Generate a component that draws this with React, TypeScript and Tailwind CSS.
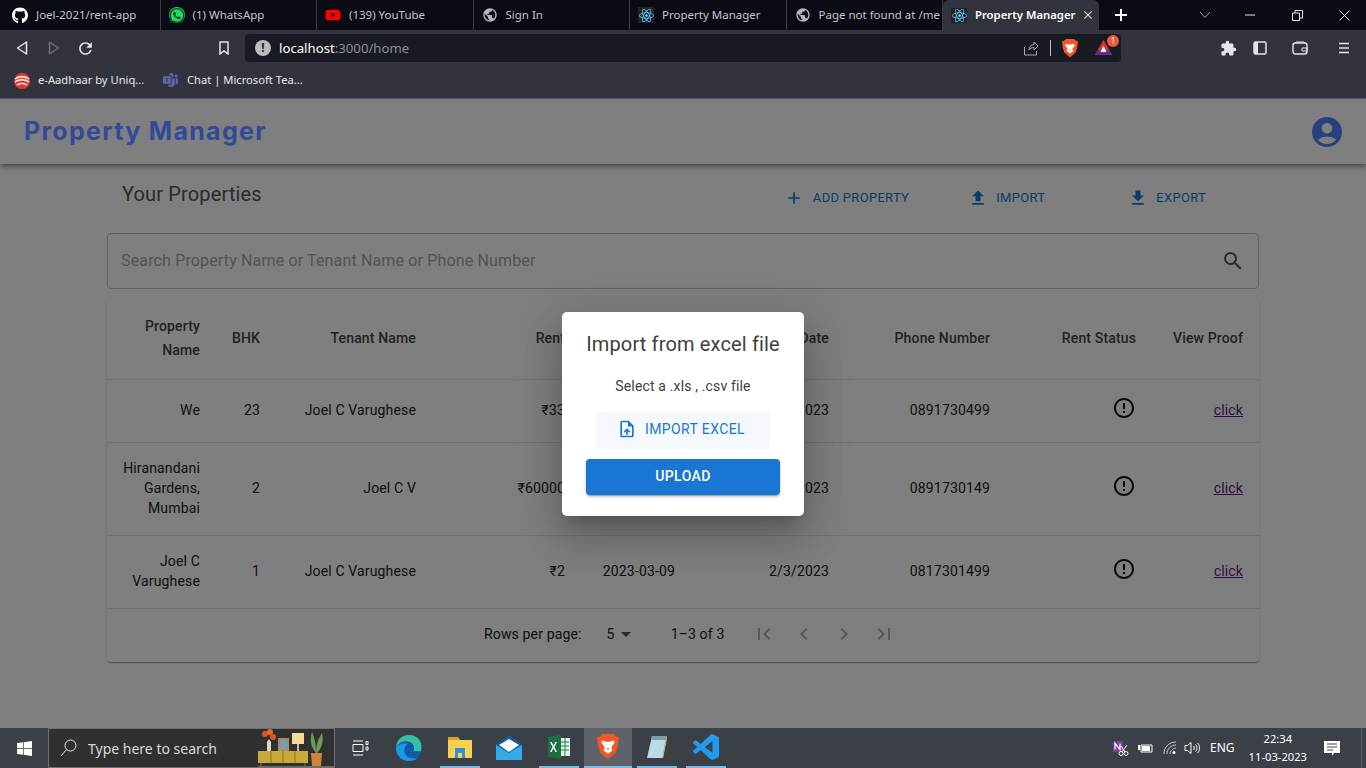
import { ReactNode } from "react";
import {
  MdAccountCircle,
  MdAdd,
  MdArrowDropDown,
  MdChevronLeft,
  MdChevronRight,
  MdClose,
  MdErrorOutline,
  MdExtension,
  MdFileDownload,
  MdFileUpload,
  MdFirstPage,
  MdLastPage,
  MdPublic,
  MdRefresh,
  MdSearch,
  MdUploadFile,
} from "react-icons/md";
import {
  FaGithub,
  FaReact,
  FaWhatsapp,
  FaWindows,
  FaYoutube,
} from "react-icons/fa";
import { BsMicrosoftTeams } from "react-icons/bs";

const tabs: { title: string; icon: ReactNode }[] = [
  { title: "Joel-2021/rent-app", icon: <FaGithub className="text-white text-[17px]" /> },
  {
    title: "(1) WhatsApp",
    icon: (
      <span className="flex h-4 w-4 items-center justify-center rounded-full bg-[#25d366]">
        <FaWhatsapp className="text-[#0c3d1c] text-[17px]" />
      </span>
    ),
  },
  {
    title: "(139) YouTube",
    icon: <FaYoutube className="text-[#ff0000] text-[18px]" />,
  },
  { title: "Sign In", icon: <MdPublic className="text-[#b4b7be] text-[18px]" /> },
  {
    title: "Property Manager",
    icon: (
      <span className="flex h-4 w-4 items-center justify-center bg-[#20232a]">
        <FaReact className="text-[#61dafb] text-[15px]" />
      </span>
    ),
  },
  { title: "Page not found at /me", icon: <MdPublic className="text-[#b4b7be] text-[18px]" /> },
];

type Row = {
  name: string[];
  bhk: string;
  tenant: string;
  rent: string;
  start: string;
  date: string;
  phone: string;
  height: string;
};

const rows: Row[] = [
  {
    name: ["We"],
    bhk: "23",
    tenant: "Joel C Varughese",
    rent: "₹33",
    start: "2023-03-09",
    date: "2/3/2023",
    phone: "0891730499",
    height: "h-[63px]",
  },
  {
    name: ["Hiranandani", "Gardens,", "Mumbai"],
    bhk: "2",
    tenant: "Joel C V",
    rent: "₹60000",
    start: "2023-03-09",
    date: "2/3/2023",
    phone: "0891730149",
    height: "h-[93px]",
  },
  {
    name: ["Joel C", "Varughese"],
    bhk: "1",
    tenant: "Joel C Varughese",
    rent: "₹2",
    start: "2023-03-09",
    date: "2/3/2023",
    phone: "0817301499",
    height: "h-[73px]",
  },
];

function BraveIcon({ size }: { size: number }) {
  return (
    <svg width={size} height={size * 1.15} viewBox="0 0 20 23" className="shrink-0">
      <path d="M5 0h10l2 2 3 1-1 8-2 6-7 6-7-6-2-6-1-8 3-1z" fill="#f1562b" />
      <path d="M5 6l3 1h4l3-1 1 2-3 4 1 3-4 3-4-3 1-3-3-4z" fill="#fff" />
      <path d="M9 13h2l-1 2z" fill="#f1562b" />
    </svg>
  );
}

function Tab({ title, icon }: { title: string; icon: ReactNode }) {
  return (
    <div className="flex h-[30px] w-[156.5px] shrink-0 items-center overflow-hidden border-r border-[#3a3c44] pl-2 pr-1">
      <span className="flex w-4 shrink-0 items-center justify-center">{icon}</span>
      <span className="ml-2 whitespace-nowrap text-[11.5px] text-[#c3c5ca]">{title}</span>
    </div>
  );
}

function BrowserChrome() {
  return (
    <div className="shrink-0 font-['Noto_Sans',sans-serif]">
      <div className="flex h-[30px] items-center bg-[#0b0b16] pl-1">
        {tabs.map((t) => (
          <Tab key={t.title} title={t.title} icon={t.icon} />
        ))}
        <div className="flex h-[30px] w-[156px] shrink-0 items-center rounded-t-md bg-[#31343f] pl-2 pr-1">
          <span className="flex w-4 items-center justify-center bg-[#20232a]">
            <FaReact className="text-[#61dafb] text-[15px]" />
          </span>
          <span className="ml-2 whitespace-nowrap text-[11.3px] font-semibold text-white">Property Manager</span>
          <MdClose className="ml-auto text-[14px] text-[#d8d9dc]" />
        </div>
        <svg className="ml-[15px]" width="14" height="14" viewBox="0 0 14 14">
          <path d="M7 1v12M1 7h12" stroke="#fff" strokeWidth="2" />
        </svg>
        <svg className="ml-[71px]" width="12" height="8" viewBox="0 0 12 8" fill="none">
          <path d="M1 1l5 5.5L11 1" stroke="#a9abb1" />
        </svg>
        <svg className="ml-[34px]" width="10" height="10" viewBox="0 0 10 10">
          <path d="M0 5h10" stroke="#e6e6e6" />
        </svg>
        <svg className="ml-[37px]" width="11" height="11" viewBox="0 0 11 11" fill="none">
          <path d="M.5 3h7v7.5h-7zM3 3V.5h7.5V8H8" stroke="#e6e6e6" />
        </svg>
        <svg className="ml-[36px]" width="11" height="11" viewBox="0 0 11 11" fill="none">
          <path d="M.5.5l10 10M10.5.5l-10 10" stroke="#e6e6e6" />
        </svg>
      </div>

      <div className="flex h-9 items-center bg-[#31343f]">
        <svg className="ml-4" width="12" height="14" viewBox="0 0 12 14" fill="none">
          <path d="M10.5 1v12L1.5 7z" stroke="#e4e5e8" strokeWidth="1.5" strokeLinejoin="round" />
        </svg>
        <svg className="ml-5" width="12" height="14" viewBox="0 0 12 14" fill="none">
          <path d="M1.5 1v12l9-6z" stroke="#6b6e77" strokeWidth="1.5" strokeLinejoin="round" />
        </svg>
        <MdRefresh className="ml-[16px] text-[19px] text-[#e4e5e8]" />
        <svg className="ml-[124px]" width="10" height="14" viewBox="0 0 10 14" fill="none">
          <path d="M1 1h8v12L5 10l-4 3z" stroke="#e4e5e8" strokeWidth="1.5" />
        </svg>
        <div className="ml-[16px] flex h-7 w-[876px] items-center rounded bg-[#181b22] pl-[10px]">
          <span className="flex h-4 w-4 items-center justify-center rounded-full bg-[#b9bbc0] text-[12px] font-bold text-[#181b22]">!</span>
          <span className="ml-2 mt-[1px] text-[13.2px] text-white">
            localhost<span className="text-[#8b8e95]">:3000/home</span>
          </span>
          <svg className="ml-auto" width="16" height="16" viewBox="0 0 16 16" fill="none">
            <path d="M1.5 7v8h12v-4M6 10c0-3 2-5.500 5-5.500V2l4 4-4 4V7.500c-2 0-4 .5-5 2.500z" stroke="#a9abb1" />
          </svg>
          <span className="ml-[11px] h-4 w-px bg-[#b9bbc0]" />
          <span className="ml-[11px]">
            <BraveIcon size={16} />
          </span>
          <div className="relative ml-[17px] mr-[10px] h-4 w-4">
            <svg width="17" height="16" viewBox="0 0 17 16">
              <path d="M8.500 0L17 15H0z" fill="#e0362c" />
              <path d="M0 15l3-5h11l3 5z" fill="#662d91" />
              <path d="M8.500 6l3 6h-6z" fill="#fff" />
            </svg>
            <span className="absolute -right-[8px] -top-[5px] flex h-[12px] w-[12px] items-center justify-center rounded-full bg-[#f0583a] text-[8px] text-white">1</span>
          </div>
        </div>
        <MdExtension className="ml-[99px] text-[17px] text-[#e4e5e8]" />
        <svg className="ml-[16px]" width="14" height="14" viewBox="0 0 14 14" fill="none">
          <rect x="1" y="1" width="12" height="12" rx="1.500" stroke="#e4e5e8" strokeWidth="1.500" />
          <rect x="1" y="1" width="4" height="12" fill="#e4e5e8" />
        </svg>
        <svg className="ml-[25px]" width="16" height="14" viewBox="0 0 16 14" fill="none">
          <rect x="1" y="2" width="14" height="11" rx="2.500" stroke="#e4e5e8" strokeWidth="1.400" />
          <path d="M3 2l1-1h8l1 1M10 7h5v3h-5z" stroke="#e4e5e8" />
        </svg>
        <svg className="ml-[30px]" width="12" height="12" viewBox="0 0 12 12">
          <path d="M1 1.500h10M1 6h10M1 10.500h10" stroke="#e4e5e8" strokeWidth="1.500" />
        </svg>
      </div>

      <div className="flex h-[33px] items-center border-b border-[#55575f] bg-[#31343f] pb-[3px]">
        <svg className="ml-[14px]" width="16" height="16" viewBox="0 0 16 16" fill="none">
          <circle cx="8" cy="8" r="8" fill="#e23b33" />
          <path d="M1 6c4-3 10-3 14 0M1 9c4-3 10-3 14 0M3 12c3-2 7-2 10 0" stroke="#fff" strokeWidth="1.300" />
        </svg>
        <span className="ml-2 w-[109px] whitespace-nowrap text-[11.2px] text-[#e6e7ea]">e-Aadhaar by Uniq...</span>
        <BsMicrosoftTeams className="ml-4 text-[15px] text-[#6264a7]" />
        <span className="ml-[9px] whitespace-nowrap text-[11.2px] text-[#e6e7ea]">Chat | Microsoft Tea...</span>
      </div>
    </div>
  );
}

function AppPage() {
  const heads: { label: ReactNode; width: string }[] = [
    { label: <>Property<br />Name</>, width: "w-[109px]" },
    { label: "BHK", width: "w-[60px]" },
    { label: "Tenant Name", width: "w-[156px]" },
    { label: "Rent", width: "w-[149px]" },
    { label: "Start", width: "w-[110px]" },
    { label: "Date", width: "w-[154px]" },
    { label: "Phone Number", width: "w-[161px]" },
    { label: "Rent Status", width: "w-[146px]" },
    { label: "View Proof", width: "w-[107px]" },
  ];

  return (
    <div className="h-full bg-white font-['Roboto',sans-serif] text-[#212121]">
      <header className="flex h-[65px] items-center justify-between px-6 shadow-[0_2px_4px_-1px_rgba(0,0,0,.4),0_4px_5px_rgba(0,0,0,.2)]">
        <h1 className="relative z-10 font-['Inter',sans-serif] text-[25px] font-bold tracking-[1.3px] text-[#33499a]">
          Property Manager
        </h1>
        <MdAccountCircle className="mr-[-3px] text-[36px] text-[#5080ff]" />
      </header>

      <main className="mx-auto w-[1152px]">
        <div className="flex h-[69px] items-center pb-[10px]">
          <h2 className="pl-[15px] text-[20px] tracking-[.15px] text-[#555]">Your Properties</h2>
          <div className="ml-auto flex items-center pr-[53px] pt-[9px] text-[13px] tracking-[.3px] text-[#1976d2]">
            <MdAdd className="text-[20px]" />
            <span className="ml-[9px]">ADD PROPERTY</span>
            <MdFileUpload className="ml-[59px] text-[20px]" />
            <span className="ml-2">IMPORT</span>
            <MdFileDownload className="ml-[83px] text-[20px]" />
            <span className="ml-2">EXPORT</span>
          </div>
        </div>

        <div className="flex h-[56px] items-center rounded border border-[#c4c4c4] pl-[13px] pr-[13px]">
          <span className="text-[16px] tracking-[.15px] text-[#a6a6a6]">
            Search Property Name or Tenant Name or Phone Number
          </span>
          <MdSearch className="ml-auto text-[24px] text-[#555]" />
        </div>

        <div className="mt-[9px] rounded shadow-[0_2px_1px_-1px_rgba(0,0,0,.2),0_1px_1px_rgba(0,0,0,.14),0_1px_3px_rgba(0,0,0,.12)]">
          <table className="w-full table-fixed border-collapse text-right text-[14px] tracking-[.15px]">
            <thead>
              <tr className="h-[81px] border-b border-[#e0e0e0]">
                {heads.map((h, i) => (
                  <th key={i} className={`${h.width} px-4 align-middle text-right font-medium leading-6 text-[#444]`}>
                    {h.label}
                  </th>
                ))}
              </tr>
            </thead>
            <tbody>
              {rows.map((r) => (
                <tr key={r.phone} className={`${r.height} border-b border-[#e0e0e0] leading-5`}>
                  <td className="pb-[2px] pr-4">
                    {r.name.map((n) => (
                      <div key={n}>{n}</div>
                    ))}
                  </td>
                  <td className="pb-[2px] pr-4">{r.bhk}</td>
                  <td className="pb-[2px] pr-4">{r.tenant}</td>
                  <td className="pb-[2px] pr-4">{r.rent}</td>
                  <td className="pb-[2px] pr-4">{r.start}</td>
                  <td className="pb-[2px] pr-4">{r.date}</td>
                  <td className="pb-[2px] pr-4">{r.phone}</td>
                  <td className="pb-[2px] pr-4">
                    <MdErrorOutline className="mb-[4px] ml-auto text-[24px] text-[#111]" />
                  </td>
                  <td className="pb-[2px] pr-4">
                    <a href="#" className="text-[#551a8b] underline">click</a>
                  </td>
                </tr>
              ))}
            </tbody>
          </table>
          <div className="flex h-[53px] items-center pb-[2px] pl-[377px] text-[14px] tracking-[.15px]">
            <span>Rows per page:</span>
            <span className="ml-[25px]">5</span>
            <MdArrowDropDown className="ml-[-1px] text-[24px] text-[#555]" />
            <span className="ml-[33px]">1–3 of 3</span>
            <div className="ml-7 flex gap-4 text-[24px] text-[#b0b0b0]">
              <MdFirstPage />
              <MdChevronLeft />
              <MdChevronRight />
              <MdLastPage />
            </div>
          </div>
        </div>
      </main>
    </div>
  );
}

function ImportDialog() {
  return (
    <div className="absolute inset-0 flex items-center justify-center bg-black/50 font-['Roboto',sans-serif]">
      <div className="flex h-[204px] w-[242px] flex-col items-center rounded-[5px] bg-white px-6 pt-[20px] shadow-[0_11px_15px_-7px_rgba(0,0,0,.2),0_24px_38px_3px_rgba(0,0,0,.14),0_9px_46px_8px_rgba(0,0,0,.12)]">
        <h2 className="whitespace-nowrap text-[20px] leading-6 tracking-[.15px] text-[#404040]">Import from excel file</h2>
        <p className="mt-[20px] text-[14px] leading-5 tracking-[.15px] text-[#404040]">Select a .xls , .csv file</p>
        <button className="mt-4 flex h-[37px] w-[174px] shrink-0 items-center justify-center rounded bg-[#f5f9fd] pb-[2px] pr-[4px] text-[14px] tracking-[.4px] text-[#1976d2]">
          <MdUploadFile className="mr-2 text-[20px]" />
          IMPORT EXCEL
        </button>
        <button className="mt-[10px] h-9 w-[194px] shrink-0 rounded bg-[#1976d2] text-[14px] font-medium tracking-[.4px] text-white shadow-[0_3px_1px_-2px_rgba(0,0,0,.2),0_2px_2px_rgba(0,0,0,.14),0_1px_5px_rgba(0,0,0,.12)]">
          UPLOAD
        </button>
      </div>
    </div>
  );
}

function SearchDoodle() {
  return (
    <svg className="ml-auto" width="76" height="40" viewBox="0 0 76 40">
      <path d="M0 38h76v2H0z" fill="#6d6a5e" />
      <rect x="0" y="23" width="50" height="12" fill="#c9a83c" />
      <path d="M3 35v5M47 35v5M13 23v12M25 23v12M37 23v12" stroke="#8d7425" />
      <path d="M9 23v-9l2-3 2 3v9z" fill="#e3d7bc" />
      <circle cx="7" cy="6" r="3" fill="#d9572a" />
      <circle cx="12" cy="4" r="3" fill="#e8692c" />
      <circle cx="15" cy="9" r="3" fill="#d9572a" />
      <rect x="20" y="10" width="11" height="13" fill="#b98750" />
      <rect x="22" y="12" width="7" height="9" fill="#6da1bc" />
      <rect x="34" y="5" width="12" height="11" fill="#f3dc9a" />
      <path d="M40 16v7" stroke="#b8b8b0" strokeWidth="2" />
      <path d="M53 25h11l-1 13h-9z" fill="#d18438" />
      <path d="M58 25C52 18 52 10 54 4c3 6 4 14 4 21zm0 0c0-8 2-14 6-20 2 8 0 15-5 20z" fill="#6d9a5c" />
    </svg>
  );
}

function Taskbar() {
  return (
    <div className="flex h-10 shrink-0 items-center bg-[#3b4047] font-['Noto_Sans',sans-serif]">
      <FaWindows className="ml-4 text-[17px] text-white" />
      <div className="ml-[15px] flex h-10 w-[287px] items-center overflow-hidden border border-[#6d6f72] bg-[#303030]">
        <svg className="ml-[11px]" width="17" height="18" viewBox="0 0 17 18" fill="none">
          <circle cx="10.500" cy="6.500" r="5.500" stroke="#e8e8e8" />
          <path d="M6.500 10.500L1 17" stroke="#e8e8e8" />
        </svg>
        <span className="ml-[11px] whitespace-nowrap text-[14px] text-[#d9d9d9]">Type here to search</span>
        <SearchDoodle />
      </div>
      <svg className="ml-[17px]" width="17" height="16" viewBox="0 0 17 16" fill="none">
        <path d="M1 1h10M1 15h10M1 4.500h10v7H1zM14 1.500h2v3h-2zM14 7h2v3h-2z" stroke="#fff" />
      </svg>
      <div className="ml-[32px] flex h-10 w-[16px] items-center justify-center">
        <svg className="shrink-0" width="26" height="26" viewBox="0 0 24 24">
          <circle cx="12" cy="12" r="12" fill="#0d5aa7" />
          <path d="M12 0C5 0 .5 5 0 12c2-5 7-7 11-6 5 1 7 5 5 9h7C25 6 20 0 12 0z" fill="#35c1a1" />
          <path d="M0 12c0 7 5 12 12 12 3 0 6-1 8-3-5 2-11 0-12-5-1-3 0-6 3-8C6 7 1 9 0 12z" fill="#1a9ae0" />
        </svg>
      </div>
      <div className="ml-[23px] flex h-10 w-[40px] flex-col items-center border-b-2 border-[#76b9ed] pt-2">
        <svg width="24" height="22" viewBox="0 0 24 22">
          <path d="M0 1h10l2 3H0z" fill="#d9a520" />
          <path d="M0 4h24v18H0z" fill="#f6d24f" />
          <path d="M7 12h10v10H7z" fill="#2f8fd8" />
          <path d="M10 17h4v5h-4z" fill="#f6d24f" />
        </svg>
      </div>
      <div className="ml-[9px] flex h-10 w-[40px] items-center justify-center">
        <svg width="26" height="24" viewBox="0 0 26 24">
          <path d="M13 0l13 9v15H0V9z" fill="#1a7fc9" />
          <path d="M0 9h26v15H0z" fill="#36a9e8" />
          <path d="M0 9l13 8 13-8v-1L13 0 0 8z" fill="#0f5fa0" />
          <path d="M3 9l10 7 10-7-10-6z" fill="#fff" />
        </svg>
      </div>
      <div className="ml-[10px] flex h-10 w-[40px] items-center justify-center border-b-2 border-[#76b9ed]">
        <svg width="23" height="24" viewBox="0 0 23 24">
          <path d="M7 3h15v18H7z" fill="#e6efe9" />
          <path d="M13 7h8M13 11h8M13 15h8M17 3v18" stroke="#1d8a50" />
          <path d="M0 2l13-2v24L0 22z" fill="#1d6f42" />
          <path d="M3.500 7l2 3.800L7.500 7h1.500L6.400 12 9 17H7.500l-2-3.800-2 3.800H2l2.600-5L2 7z" fill="#fff" />
        </svg>
      </div>
      <div className="ml-[5px] flex h-10 w-12 items-center justify-center border-b-2 border-[#76b9ed] bg-[#5f6368]">
        <BraveIcon size={22} />
      </div>
      <div className="ml-[5px] flex h-10 w-[40px] items-center justify-center border-b-2 border-[#76b9ed]">
        <svg width="22" height="26" viewBox="0 0 22 26">
          <path d="M6 2h15l-4 22H1z" fill="#b9dbe6" />
          <path d="M6 2h15l-1 4H5z" fill="#7b9ca8" />
          <path d="M16 24l4-20 1 1-4 19z" fill="#c7a86b" />
        </svg>
      </div>
      <div className="ml-[9px] flex h-10 w-[40px] items-center justify-center border-b-2 border-[#76b9ed]">
        <svg width="26" height="26" viewBox="0 0 24 24">
          <path
            d="M23.15 2.587L18.21.21a1.494 1.494 0 0 0-1.705.29l-9.46 8.63-4.12-3.128a.999.999 0 0 0-1.276.057L.327 7.261A1 1 0 0 0 .326 8.74L3.899 12 .326 15.26a1 1 0 0 0 .001 1.479L1.65 17.94a.999.999 0 0 0 1.276.057l4.12-3.128 9.46 8.63a1.492 1.492 0 0 0 1.704.29l4.942-2.377A1.5 1.5 0 0 0 24 20.06V3.939a1.5 1.5 0 0 0-.85-1.352zm-5.146 14.861L10.826 12l7.178-5.448v10.896z"
            fill="#1f9cf0"
          />
        </svg>
      </div>

      <div className="ml-auto flex items-center text-white">
        <svg width="16" height="15" viewBox="0 0 16 15" fill="none">
          <path d="M0 0h10v11H0z" fill="#7e3f98" />
          <path d="M2 8.500v-6l5 6v-6" stroke="#fff" strokeWidth="1.200" />
          <circle cx="8" cy="12.500" r="2" stroke="#fff" />
          <circle cx="13" cy="12.500" r="2" stroke="#fff" />
          <path d="M9 11l5-7M12 11L8 5" stroke="#fff" />
        </svg>
        <svg className="ml-[7px]" width="17" height="12" viewBox="0 0 17 12" fill="none">
          <path d="M5 3h11v7H5z" stroke="#fff" />
          <path d="M6 4h8v5H6zM0 6h3M2 3h2v5H2z" fill="#fff" />
        </svg>
        <svg className="ml-[10px]" width="14" height="14" viewBox="0 0 14 14" fill="none">
          <path d="M1 13C1 6 6 1 13 1M4 13c0-5 4-9 9-9M7 13c0-3 3-6 6-6" stroke="#c9cbd0" />
          <circle cx="11" cy="11.500" r="1.500" fill="#fff" />
        </svg>
        <svg className="ml-[7px]" width="16" height="14" viewBox="0 0 16 14" fill="none">
          <path d="M1 4.500h2.500L7 1.500v11l-3.500-3H1zM9.500 5c1 1 1 3 0 4M11.500 3.500c2 2 2 5 0 7M13.500 2c3 3 3 7 0 10" stroke="#fff" />
        </svg>
        <span className="ml-[10px] text-[12px]">ENG</span>
        <div className="ml-[14px] flex flex-col items-center text-[11.2px] leading-[18px]">
          <span>22:34</span>
          <span>11-03-2023</span>
        </div>
        <svg className="ml-[17px]" width="16" height="15" viewBox="0 0 16 15">
          <path d="M0 0h16v12h-6l-2 3v-3H0z" fill="#fff" />
          <path d="M3 3h10M3 6h10M3 9h6" stroke="#3b4047" />
        </svg>
        <span className="ml-[21px] mr-[4px] h-10 w-px bg-[#5a5e64]" />
      </div>
    </div>
  );
}

export default function App() {
  return (
    <div className="flex h-screen w-full flex-col overflow-hidden">
      <BrowserChrome />
      <div className="relative min-h-0 flex-1">
        <AppPage />
        <ImportDialog />
      </div>
      <Taskbar />
    </div>
  );
}
